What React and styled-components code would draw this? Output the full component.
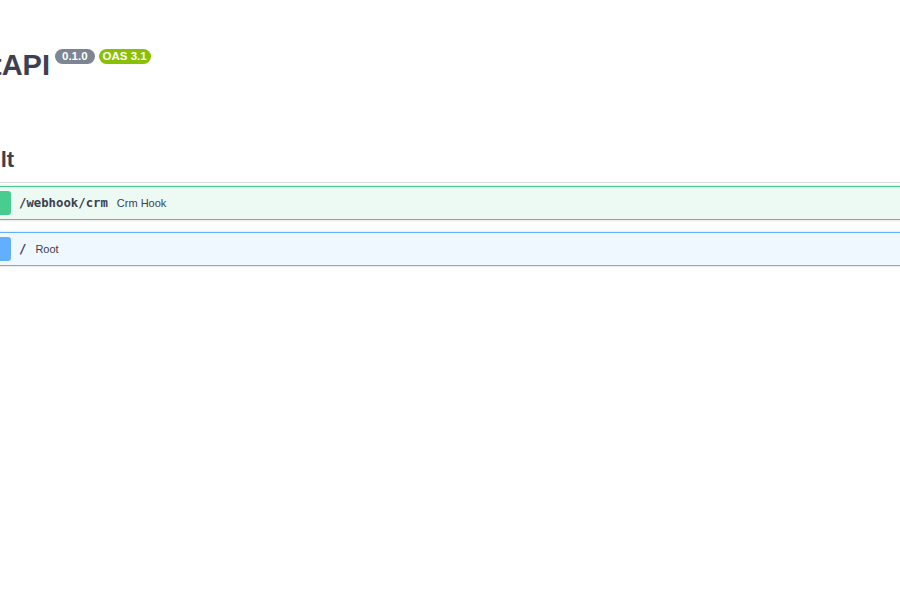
import React from "react";
import styled, { createGlobalStyle } from "styled-components";

const GlobalStyle = createGlobalStyle`
  html, body {
    margin: 0;
    padding: 0;
    background: #ffffff;
    overflow: hidden;
  }
  body {
    font-family: "Liberation Sans", Arial, sans-serif;
    color: #3b4151;
  }
`;

const Wrapper = styled.div`
  width: 1400px;
  margin-left: -58px;
  box-sizing: border-box;
`;

const Info = styled.div`
  margin: 49px 0 55px;
`;

const Title = styled.h2`
  display: flex;
  align-items: flex-start;
  margin: 0;
  font-size: 29px;
  line-height: 1.15;
  font-weight: 700;
  color: #3b4151;
`;

const Stamp = styled.small`
  display: inline-block;
  margin-left: ${(p) => p.$gap}px;
  padding: 1px ${(p) => p.$pad}px 2px;
  border-radius: 57px;
  background: ${(p) => p.$bg};
  color: #ffffff;
  font-size: 11.5px;
  line-height: 12px;
  font-weight: 700;
`;

const TagHeading = styled.h3`
  margin: 0 0 3px;
  padding: 10px 20px 9px 0;
  font-size: 22px;
  line-height: 1.15;
  font-weight: 700;
  color: #3b4151;
  border-bottom: 1px solid rgba(59, 65, 81, 0.2);
`;

const Operation = styled.div`
  display: flex;
  align-items: center;
  margin: 0 0 12px;
  padding: 4px;
  border: 1px solid ${(p) => p.$color};
  border-radius: 4px;
  background: ${(p) => p.$tint};
  box-shadow: 0 0 3px rgba(0, 0, 0, 0.19);
`;

const Method = styled.span`
  flex: none;
  width: 64px;
  height: 24px;
  border-radius: 3px;
  background: ${(p) => p.$color};
  color: #ffffff;
  font-size: 11px;
  font-weight: 700;
  line-height: 24px;
  text-align: center;
`;

const Path = styled.span`
  padding: 0 8px;
  font-family: "DejaVu Sans Mono", "Liberation Mono", monospace;
  font-size: 12.3px;
  font-weight: 700;
  color: #3b4151;
`;

const Summary = styled.span`
  padding-left: 1px;
  font-size: 11px;
  color: #3b4151;
`;

const ops = [
  { method: "POST", path: "/webhook/crm", summary: "Crm Hook", color: "#49cc90", tint: "#edfaf4" },
  { method: "GET", path: "/", summary: "Root", color: "#61affe", tint: "#eff7ff" },
];

export default function App() {
  return (
    <>
      <GlobalStyle />
      <Wrapper>
        <Info>
          <Title>
            FastAPI
            <Stamp $bg="#7d8492" $pad={7} $gap={5}>0.1.0</Stamp>
            <Stamp $bg="#89bf04" $pad={4} $gap={4}>OAS 3.1</Stamp>
          </Title>
        </Info>
        <TagHeading>default</TagHeading>
        {ops.map((op) => (
          <Operation key={op.path} $color={op.color} $tint={op.tint}>
            <Method $color={op.color}>{op.method}</Method>
            <Path>{op.path}</Path>
            <Summary>{op.summary}</Summary>
          </Operation>
        ))}
      </Wrapper>
    </>
  );
}
